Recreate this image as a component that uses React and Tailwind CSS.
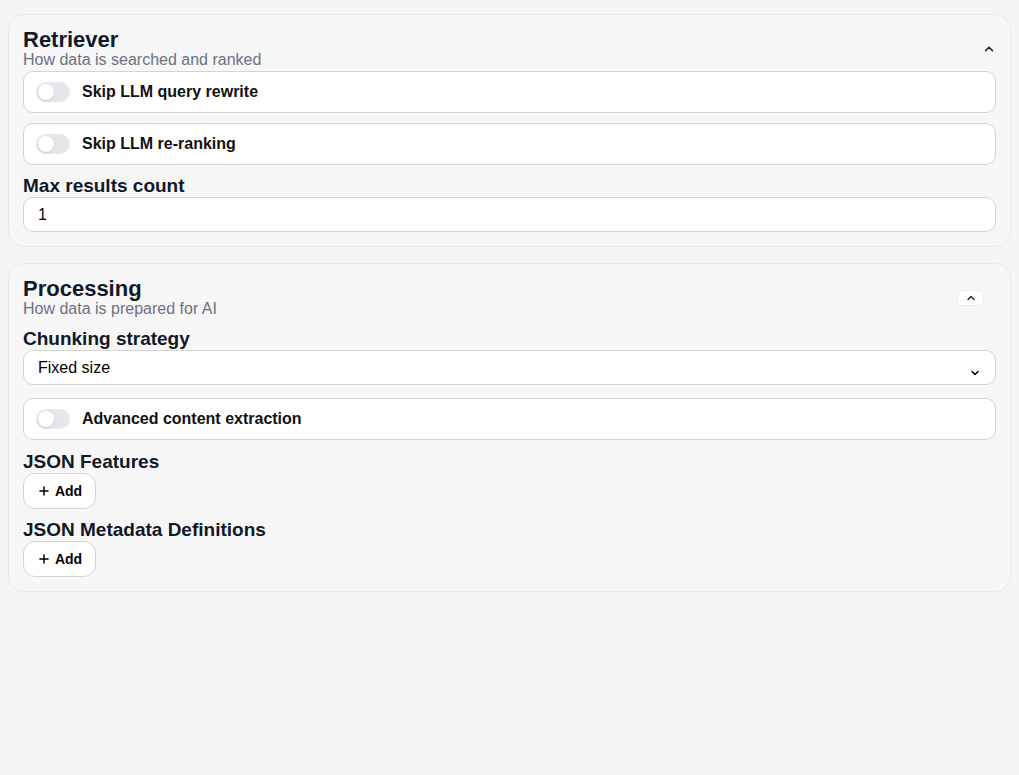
import { ChevronUp, ChevronDown, Plus } from 'lucide-react';

const font = { fontFamily: '"Liberation Sans", Arial, sans-serif' };

function Toggle() {
  return (
    <span className="relative inline-flex h-5 w-[34px] shrink-0 items-center rounded-full bg-[#e5e7eb]">
      <span className="ml-0.5 h-4 w-4 rounded-full bg-white shadow-sm" />
    </span>
  );
}

function ToggleRow({ label, className = '' }) {
  return (
    <div className={`flex items-center gap-3 rounded-[10px] border border-[#d4d4d8] bg-white px-3 py-2.5 ${className}`}>
      <Toggle />
      <span className="text-base font-bold leading-5 text-[#111]">{label}</span>
    </div>
  );
}

function Label({ children, className = '' }) {
  return <div className={`text-[19px] font-bold leading-[22px] text-[#111827] ${className}`}>{children}</div>;
}

function AddButton() {
  return (
    <button className="flex h-9 w-[73px] items-center justify-center gap-1 rounded-xl border border-[#d4d4d8] bg-white text-sm font-bold text-black">
      <Plus className="h-3.5 w-3.5" strokeWidth={2.5} />
      Add
    </button>
  );
}

function Header({ title, subtitle, children }) {
  return (
    <div className="flex items-center justify-between">
      <div>
        <h2 className="text-[22px] font-bold leading-[22px] text-[#111827]">{title}</h2>
        <p className="text-base leading-[18px] text-[#6b7280]">{subtitle}</p>
      </div>
      {children}
    </div>
  );
}

export default function App() {
  return (
    <div className="min-h-screen bg-[#f3f4f6] px-2 pt-3.5" style={font}>
      <section className="rounded-2xl border border-[#e9e9ec] bg-[#f7f7f8] p-3.5">
        <Header title="Retriever" subtitle="How data is searched and ranked">
          <ChevronUp className="h-3.5 w-3.5 text-[#111827]" strokeWidth={2.5} />
        </Header>
        <ToggleRow label="Skip LLM query rewrite" className="mt-0.5" />
        <ToggleRow label="Skip LLM re-ranking" className="mt-2.5" />
        <Label className="mt-2.5">Max results count</Label>
        <div className="flex h-[35px] items-center rounded-[10px] border border-[#d4d4d8] bg-white px-3.5 text-base text-black">
          1
        </div>
      </section>

      <section className="mt-4 rounded-2xl border border-[#e9e9ec] bg-[#f7f7f8] p-3.5">
        <Header title="Processing" subtitle="How data is prepared for AI">
          <button className="mr-3 flex h-4 w-[27px] items-center justify-center rounded-md border border-[#ececef] bg-white">
            <ChevronUp className="h-3 w-3 text-[#111827]" strokeWidth={2.5} />
          </button>
        </Header>
        <Label className="mt-2.5">Chunking strategy</Label>
        <div className="flex h-[35px] items-center justify-between rounded-[10px] border border-[#d4d4d8] bg-white px-3.5 text-base text-black">
          <span>Fixed size</span>
          <ChevronDown className="mt-2.5 h-3 w-3 text-black" strokeWidth={3} />
        </div>
        <ToggleRow label="Advanced content extraction" className="mt-[13px]" />
        <Label className="mt-[11px]">JSON Features</Label>
        <AddButton />
        <Label className="mt-2.5">JSON Metadata Definitions</Label>
        <AddButton />
      </section>
    </div>
  );
}
